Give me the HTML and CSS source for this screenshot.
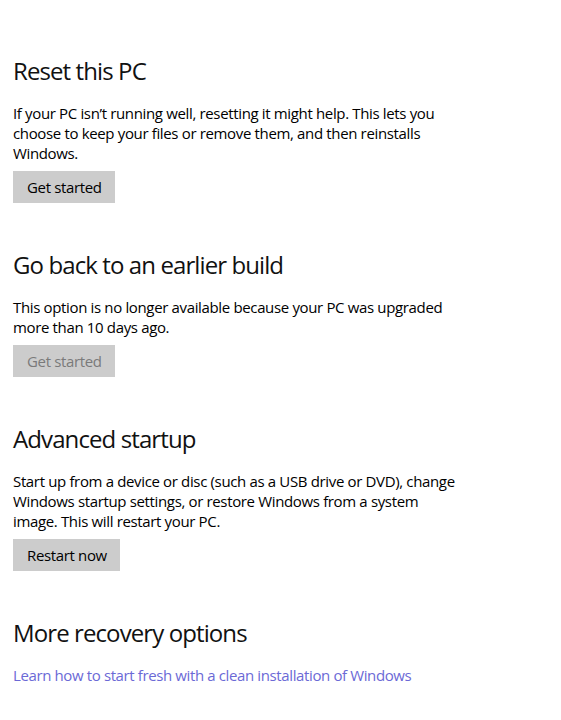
FILE: index.html
```html
<!DOCTYPE html>
<html lang="en">
<head>
<meta charset="utf-8">
<title>Recovery</title>
<link rel="stylesheet" href="styles.css">
</head>
<body>
<main class="page">
  <section class="group">
    <h2 class="title">Reset this PC</h2>
    <p class="desc">If your PC isn’t running well, resetting it might help. This lets you<br>choose to keep your files or remove them, and then reinstalls<br>Windows.</p>
    <button class="btn" type="button">Get started</button>
  </section>
  <section class="group">
    <h2 class="title">Go back to an earlier build</h2>
    <p class="desc">This option is no longer available because your PC was upgraded<br>more than 10 days ago.</p>
    <button class="btn" type="button" disabled>Get started</button>
  </section>
  <section class="group">
    <h2 class="title">Advanced startup</h2>
    <p class="desc">Start up from a device or disc (such as a USB drive or DVD), change<br>Windows startup settings, or restore Windows from a system<br>image. This will restart your PC.</p>
    <button class="btn" type="button">Restart now</button>
  </section>
  <section class="group">
    <h2 class="title">More recovery options</h2>
    <a class="link" href="#">Learn how to start fresh with a clean installation of Windows</a>
  </section>
</main>
</body>
</html>
```

FILE: styles.css
```css
html, body {
  margin: 0;
  padding: 0;
  background: #ffffff;
}

body {
  font-family: "Open Sans", "Noto Sans", "Liberation Sans", sans-serif;
  color: #000000;
  width: 561px;
  height: 720px;
  overflow: hidden;
}

.page {
  padding: 55px 13px 0 13px;
  display: flex;
  flex-direction: column;
  gap: 46px;
}

.group {
  display: flex;
  flex-direction: column;
  align-items: flex-start;
}

.title {
  margin: 0 0 16px 0;
  font-size: 24px;
  line-height: 32px;
  font-weight: 400;
  letter-spacing: -0.9px;
  color: #111111;
}

.desc {
  margin: 0 0 8px 0;
  font-size: 15px;
  line-height: 20px;
  white-space: nowrap;
  letter-spacing: -0.35px;
}

.btn {
  font-family: inherit;
  font-size: 15px;
  line-height: 20px;
  height: 32px;
  padding: 0 13px 0 14px;
  border: none;
  border-radius: 0;
  background: #cccccc;
  color: #000000;
  letter-spacing: -0.35px;
  cursor: pointer;
}

.btn:disabled {
  color: #7a7a7a;
  cursor: default;
}

.link {
  font-size: 15px;
  line-height: 20px;
  color: #6b69d6;
  text-decoration: none;
  letter-spacing: -0.38px;
}
```
